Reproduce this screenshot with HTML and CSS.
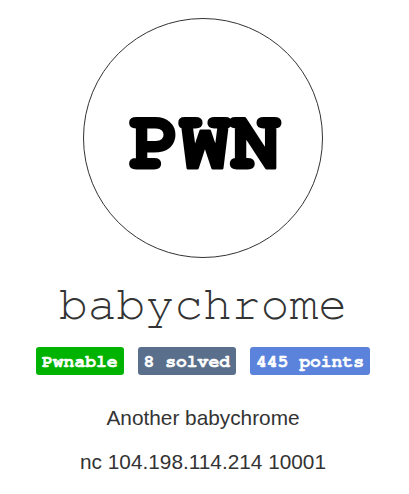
FILE: index.html
```html
<!DOCTYPE html>
<html>
<head>
<meta charset="utf-8">
<link rel="stylesheet" href="styles.css">
</head>
<body>
<main class="challenge">
  <div class="icon">
    <svg class="icon-svg" width="240" height="240" viewBox="0 0 240 240">
      <circle cx="120" cy="120" r="119.5" fill="#fff" stroke="#333" stroke-width="1"/>
      <text class="icon-text" x="122" y="150" text-anchor="middle">PWN</text>
    </svg>
  </div>
  <h1 class="title">babychrome</h1>
  <div class="badges">
    <span class="badge badge-cat">Pwnable</span>
    <span class="badge badge-solved">8 solved</span>
    <span class="badge badge-points">445 points</span>
  </div>
  <p class="desc">Another babychrome</p>
  <p class="desc">nc 104.198.114.214 10001</p>
</main>
</body>
</html>
```
FILE: styles.css
```css
html, body {
  margin: 0;
  padding: 0;
  background: #fff;
}
body {
  width: 406px;
}
.challenge {
  display: flex;
  flex-direction: column;
  align-items: center;
  padding-top: 18px;
  color: #333;
}
.icon {
  width: 240px;
  height: 240px;
}
.icon-svg {
  display: block;
}
.icon-text {
  font-family: "FreeMono", "TeX Gyre Cursor", "Courier New", monospace;
  font-weight: bold;
  font-size: 84px;
  fill: #000;
  stroke: #000;
  stroke-width: 3px;
  stroke-linejoin: round;
}
.title {
  margin: 19px 0 0;
  font-family: "FreeMono", "TeX Gyre Cursor", "Courier New", monospace;
  font-weight: normal;
  font-size: 48px;
  line-height: 56px;
  color: #333;
}
.badges {
  display: flex;
  gap: 14px;
  margin-top: 14px;
}
.badge {
  display: block;
  font-family: "FreeMono", "TeX Gyre Cursor", "Courier New", monospace;
  font-weight: bold;
  font-size: 18px;
  line-height: 18px;
  padding: 6px 6px 4px;
  border-radius: 3px;
  color: #fff;
  -webkit-text-stroke: 0.5px #fff;
  white-space: nowrap;
}
.badge-cat { background: #00b300; }
.badge-solved { background: #5a6f8c; }
.badge-points { background: #5b83db; }
.desc {
  margin: 27px 0 0;
  font-family: "Liberation Sans", Arial, sans-serif;
  font-size: 20.8px;
  line-height: 31px;
  color: #333;
}
.desc + .desc {
  margin-top: 13px;
}
```
